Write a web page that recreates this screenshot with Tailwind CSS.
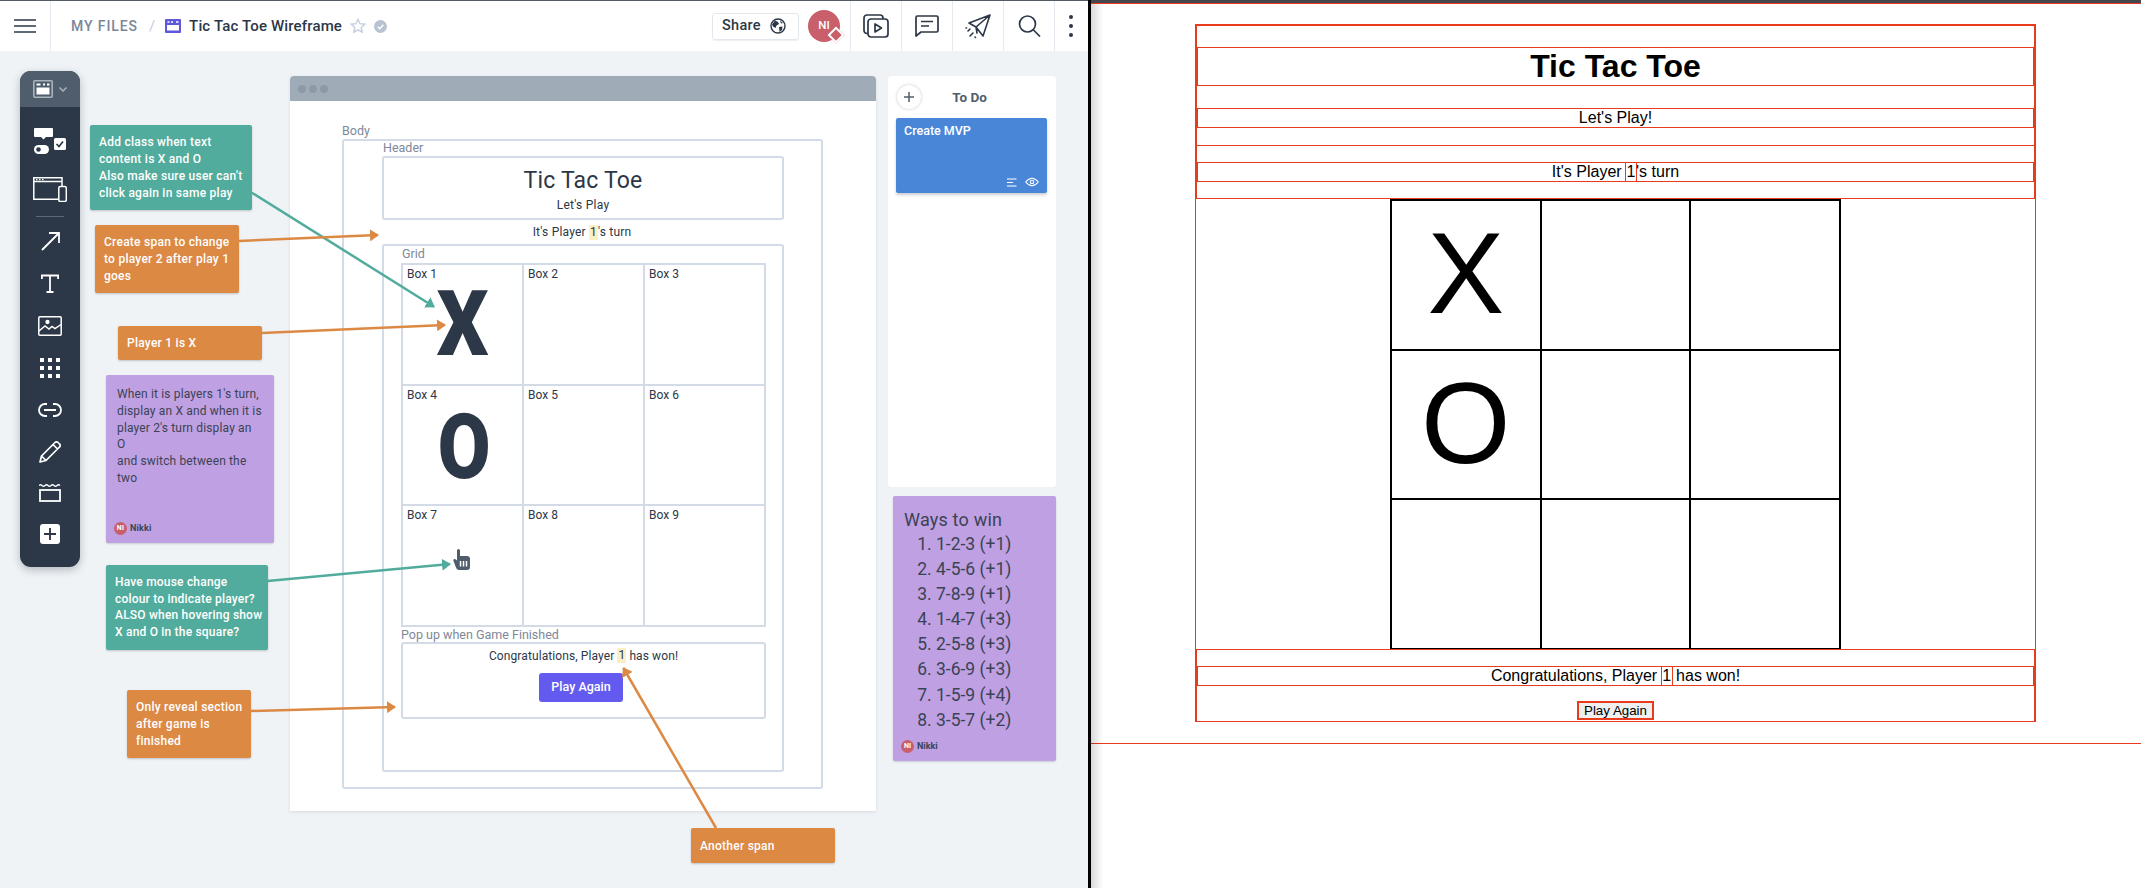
<!DOCTYPE html>
<html>
<head>
<meta charset="utf-8">
<script src="https://cdn.jsdelivr.net/npm/@tailwindcss/browser@4"></script>
</head>
<body class="m-0 bg-white overflow-hidden font-['Roboto',sans-serif]">
<div class="flex w-[2141px] h-[888px] overflow-hidden">

  <!-- LEFT: wireframe tool -->
  <div class="relative flex flex-col w-[1088px] h-full bg-[#eff3f6] text-[#2c3747]">
    <header class="flex items-stretch h-[51px] bg-white border-t border-[#555b63] shadow-[0_1px_2px_rgba(44,55,71,0.15)] shrink-0">
      <div class="flex items-center justify-center w-[51px] border-r border-[#e6eaf0]">
        <svg width="22" height="14" viewBox="0 0 22 14"><path d="M0 1h22M0 7h22M0 13h22" stroke="#2c3747" stroke-width="1.7"/></svg>
      </div>
      <div class="flex items-center ml-[20px] text-[15px]">
        <span class="font-medium tracking-[0.9px] text-[14px] text-[#7b8698]">MY FILES</span>
        <span class="ml-[11px] text-[#c4ccd8] text-[15px]">/</span>
        <svg class="ml-[10px]" width="16" height="14" viewBox="0 0 16 14"><rect width="16" height="14" rx="1" fill="#5d58dc"/><rect x="2" y="6" width="12" height="5.5" fill="#fff"/><path d="M2.5 3h2M6 3h2M11 3h2.5" stroke="#fff" stroke-width="1.6"/></svg>
        <span class="ml-[8px] font-medium text-[15px] tracking-[0.15px] text-[#2c3747]">Tic Tac Toe Wireframe</span>
        <svg class="ml-[8px]" width="16" height="16" viewBox="0 0 16 16"><path d="M8 1.2l2 4.5 4.8.5-3.6 3.2 1 4.8L8 11.8l-4.2 2.4 1-4.8L1.2 6.2 6 5.7z" fill="none" stroke="#c5cede" stroke-width="1.4"/></svg>
        <svg class="ml-[8px]" width="13" height="13" viewBox="0 0 13 13"><circle cx="6.5" cy="6.5" r="6.5" fill="#b8c3d1"/><path d="M3.8 6.8l2 2 3.6-4" fill="none" stroke="#fff" stroke-width="1.4"/></svg>
      </div>
      <div class="flex items-center ml-auto">
        <div class="flex items-center h-[27px] w-[87px] pl-[9px] border border-[#e3e7ee] rounded-[3px] shadow-[0_1px_1px_rgba(44,55,71,0.08)]">
          <span class="font-medium text-[14.5px] tracking-[0.3px]">Share</span>
          <svg class="ml-[9px]" width="16" height="16" viewBox="0 0 16 16"><circle cx="8" cy="8" r="7" fill="none" stroke="#2c3747" stroke-width="1.4"/><path d="M5 2.5l3 1.5 1 2-2.5 1.5-1 2.500-2.500-1.500-1-2zM9 9l3.500-.5-.5 3.500-2.500 2zM10 2.500l3 2.500-2 .5z" fill="#2c3747"/></svg>
        </div>
        <div class="relative flex items-center justify-center w-[32px] h-[32px] ml-[9px] mr-[10px] rounded-full bg-[#c85f6a] text-white text-[11.5px] font-medium">NI
          <div class="absolute right-[-2px] bottom-[1px] w-[8px] h-[8px] rotate-45 bg-[#c85f6a] border-2 border-white box-content"></div>
        </div>
        <div class="flex items-center justify-center w-[51px] h-full border-l border-[#e6eaf0]">
          <svg width="26" height="24" viewBox="0 0 26 24" fill="none" stroke="#2c3747" stroke-width="1.7" stroke-linejoin="round"><path d="M5 19.500H4a3 3 0 0 1-3-3V4a3 3 0 0 1 3-3h13a3 3 0 0 1 3 3v1"/><rect x="5" y="5" width="20" height="18" rx="3"/><path d="M12 10v8l6.500-4z"/></svg>
        </div>
        <div class="flex items-center justify-center w-[51px] h-full border-l border-[#e6eaf0]">
          <svg width="24" height="22" viewBox="0 0 24 22" fill="none" stroke="#2c3747" stroke-width="1.7" stroke-linejoin="round"><path d="M1 2.500A1.500 1.500 0 0 1 2.500 1h19A1.500 1.500 0 0 1 23 2.500v13a1.500 1.500 0 0 1-1.500 1.500H6l-5 4z"/><path d="M6 6.500h12M6 11h8"/></svg>
        </div>
        <div class="flex items-center justify-center w-[51px] h-full border-l border-[#e6eaf0]">
          <svg width="26" height="25" viewBox="0 0 26 25" fill="none" stroke="#2c3747" stroke-width="1.6" stroke-linejoin="round" stroke-linecap="round"><path d="M25 1L4 9l7 4zM25 1l-7 21-7-9zM25 1L11 13l1 6"/><path d="M5 15l-2 2M8 19l-3 3M1 14h.5M10 23l.5.5" /></svg>
        </div>
        <div class="flex items-center justify-center w-[51px] h-full border-l border-[#e6eaf0]">
          <svg width="23" height="22" viewBox="0 0 23 22" fill="none" stroke="#2c3747" stroke-width="1.7"><circle cx="9.500" cy="9" r="8"/><path d="M15.500 15l6.500 6.500"/></svg>
        </div>
        <div class="flex items-center justify-center w-[34px] h-full border-l border-[#e6eaf0]">
          <svg width="4" height="22" viewBox="0 0 4 22" class="mr-[1px]" fill="#2c3747"><circle cx="2" cy="2" r="2"/><circle cx="2" cy="11" r="2"/><circle cx="2" cy="20" r="2"/></svg>
        </div>
      </div>
    </header>

    <main class="flex-1 bg-[#eff3f6]"></main>

    <!-- toolbar -->
    <div class="absolute left-[20px] top-[71px] w-[60px] h-[496px] rounded-[11px] bg-[#2c3747] shadow-[0_3px_8px_rgba(44,55,71,0.3)] flex flex-col items-center overflow-hidden">
      <div class="flex items-center justify-center w-full h-[36px] bg-[#4f5d6c] shrink-0">
        <svg width="20" height="18" viewBox="0 0 20 18"><rect x=".8" y=".8" width="18.400" height="16.400" rx="1" fill="none" stroke="#aab4bf" stroke-width="1.600"/><rect x="3.500" y="7.500" width="13" height="7" fill="#fff"/><path d="M3.500 4.500h4M10 4.500h2M14 4.500h2.500" stroke="#fff" stroke-width="1.800"/></svg>
        <svg class="ml-[6px]" width="8" height="5" viewBox="0 0 8 5"><path d="M.5.500L4 4 7.500.500" fill="none" stroke="#aab4bf" stroke-width="1.500"/></svg>
      </div>
      <svg class="mt-[21px] shrink-0" width="32" height="26" viewBox="0 0 32 26"><path d="M1 0h17a1 1 0 0 1 1 1v7a1 1 0 0 1-1 1h-6l-2.500 2.500L7 9H1a1 1 0 0 1-1-1V1a1 1 0 0 1 1-1z" fill="#fff"/><rect x="20" y="10" width="12" height="12" rx="1.500" fill="#fff"/><path d="M22.500 16l2.500 2.500 4-5" fill="none" stroke="#2c3747" stroke-width="1.700"/><rect x="0" y="17" width="15" height="9" rx="4.500" fill="#fff"/><circle cx="4.500" cy="21.500" r="2.300" fill="#2c3747"/></svg>
      <svg class="mt-[23px] shrink-0" width="34" height="25" viewBox="0 0 34 25" fill="none" stroke="#fff" stroke-width="1.500"><path d="M.8 4.500h28M29 9V.8H.8v21.500H25"/><path d="M3 2.700h1.500M6 2.700h1.500M9 2.700h1.500" stroke-width="1.200"/><rect x="25.800" y="9.500" width="7.500" height="15" rx="1.500" fill="#2c3747"/></svg>
      <div class="w-[28px] h-px mt-[14px] bg-[#5c6876] shrink-0"></div>
      <svg class="mt-[15px] shrink-0" width="19" height="19" viewBox="0 0 19 19" fill="none" stroke="#fff" stroke-width="1.800"><path d="M1 18L18 1M8 1h10v10"/></svg>
      <svg class="mt-[23px] shrink-0" width="18" height="19" viewBox="0 0 18 19" fill="none" stroke="#fff" stroke-width="1.800"><path d="M.9 5V1.500h16.200V5M9 1.500V18M5.500 18h7"/></svg>
      <svg class="mt-[23px] shrink-0" width="24" height="20" viewBox="0 0 24 20" fill="none" stroke="#fff" stroke-width="1.500"><rect x=".8" y=".8" width="22.400" height="18.400" rx="1"/><path d="M1 15l6-5 4 3 3-2.500 3 2 6-4"/><circle cx="9.500" cy="6" r="1.400" fill="#fff"/></svg>
      <svg class="mt-[22px] shrink-0" width="20" height="20" viewBox="0 0 20 20" fill="#fff"><rect x="0" y="0" width="4" height="4"/><rect x="8" y="0" width="4" height="4"/><rect x="16" y="0" width="4" height="4"/><rect x="0" y="8" width="4" height="4"/><rect x="8" y="8" width="4" height="4"/><rect x="16" y="8" width="4" height="4"/><rect x="0" y="16" width="4" height="4"/><rect x="8" y="16" width="4" height="4"/><rect x="16" y="16" width="4" height="4"/></svg>
      <svg class="mt-[25px] shrink-0" width="24" height="14" viewBox="0 0 24 14" fill="none" stroke="#fff" stroke-width="1.800"><path d="M9 1H7a6 6 0 0 0 0 12h2M15 1h2a6 6 0 0 1 0 12h-2M6 7h12"/></svg>
      <svg class="mt-[24px] shrink-0" width="22" height="22" viewBox="0 0 22 22" fill="none" stroke="#fff" stroke-width="1.700" stroke-linejoin="round"><path d="M1 21l1.500-6L16 1.500a2 2 0 0 1 3 0l1.500 1.500a2 2 0 0 1 0 3L7 19.500zM2.500 15L7 19.500M14 3.500L18.500 8"/></svg>
      <svg class="mt-[20px] shrink-0" width="22" height="19" viewBox="0 0 22 19" fill="none" stroke="#fff"><rect x="1" y="7" width="20" height="11" stroke-width="1.800"/><path d="M0 2.500q1.500-1.500 3 0t3 0 3 0 3 0 3 0 3 0 3 0" stroke-width="1.300"/></svg>
      <svg class="mt-[22px] shrink-0" width="20" height="20" viewBox="0 0 20 20"><rect width="20" height="20" rx="3" fill="#fff"/><path d="M10 4v12M4 10h12" stroke="#2c3747" stroke-width="1.900"/></svg>
    </div>

    <!-- wireframe window -->
    <div class="absolute left-[290px] top-[76px] w-[586px] h-[735px] bg-white rounded-t-[4px] shadow-[0_1px_3px_rgba(44,55,71,0.12)] flex flex-col">
      <div class="flex items-center gap-[3px] h-[25px] pl-[8px] bg-[#a0abb8] rounded-t-[4px] shrink-0">
        <span class="w-[8px] h-[8px] rounded-full bg-[#8e99a8]"></span>
        <span class="w-[8px] h-[8px] rounded-full bg-[#8e99a8]"></span>
        <span class="w-[8px] h-[8px] rounded-full bg-[#8e99a8]"></span>
      </div>
      <div class="ml-[52px] mt-[22px] h-[16px] text-[12.500px] leading-[16px] text-[#7d8899]">Body</div>
      <div class="ml-[52px] w-[481px] h-[650px] border-2 border-[#d3dbe6] rounded-[3px] pl-[38px]">
        <div class="h-[15px] pl-[1px] text-[12.500px] leading-[14px] text-[#7d8899]">Header</div>
        <div class="flex flex-col items-center w-[402px] h-[64px] border-2 border-[#d3dbe6] rounded-[3px]">
          <div class="mt-[8px] text-[23px] leading-[30px] tracking-[0.2px]">Tic Tac Toe</div>
          <div class="text-[12px] leading-[18px] tracking-[0.25px]">Let's Play</div>
        </div>
        <div class="flex items-center justify-center w-[402px] h-[24px] pr-[2px] text-[12px] tracking-[0.2px]">
          <span>It's Player&nbsp;</span><span class="bg-[#fbefc6] leading-[15px] px-[1px]">1</span><span>'s turn</span>
        </div>
        <div class="w-[402px] h-[528px] border-2 border-[#d3dbe6] rounded-[3px]">
          <div class="h-[17px] pl-[18px] text-[12.500px] leading-[16px] text-[#7d8899]">Grid</div>
          <div class="grid grid-cols-3 grid-rows-3 ml-[17px] w-[365px] h-[364px] border-l-2 border-t-2 border-[#d3dbe6] text-[12px] leading-[16px]">
            <div class="border-r-2 border-b-2 border-[#d3dbe6] pl-[4px] pt-[1px] overflow-hidden">Box 1<div class="mt-[-5px] text-center pr-[4px] text-[90px] leading-[96px] font-black scale-x-[0.9]">X</div></div>
            <div class="border-r-2 border-b-2 border-[#d3dbe6] pl-[4px] pt-[1px]">Box 2</div>
            <div class="border-r-2 border-b-2 border-[#d3dbe6] pl-[4px] pt-[1px]">Box 3</div>
            <div class="border-r-2 border-b-2 border-[#d3dbe6] pl-[4px] pt-[1px] overflow-hidden">Box 4<div class="mt-[-3px] text-center pr-[1px] text-[90px] leading-[96px] font-black scale-x-[0.85]">O</div></div>
            <div class="border-r-2 border-b-2 border-[#d3dbe6] pl-[4px] pt-[1px]">Box 5</div>
            <div class="border-r-2 border-b-2 border-[#d3dbe6] pl-[4px] pt-[1px]">Box 6</div>
            <div class="border-r-2 border-b-2 border-[#d3dbe6] pl-[4px] pt-[1px]">Box 7
              <svg class="ml-[46px] mt-[26px]" width="18" height="21" viewBox="0 0 18 21"><path d="M4 1.500a1.500 1.500 0 0 1 3 0V7h7a3 3 0 0 1 3 3v8a3 3 0 0 1-3 3H6a3 3 0 0 1-3-2.500L.5 12C0 11 .8 9.500 2 10l2 1.500z" fill="#4f5d6c"/><path d="M7.500 12v5.500M10.500 12v5.500M13.500 12v5.500" stroke="#fff" stroke-width="1.500"/></svg>
            </div>
            <div class="border-r-2 border-b-2 border-[#d3dbe6] pl-[4px] pt-[1px]">Box 8</div>
            <div class="border-r-2 border-b-2 border-[#d3dbe6] pl-[4px] pt-[1px]">Box 9</div>
          </div>
          <div class="h-[15px] pl-[17px] text-[12.500px] leading-[15px] text-[#7d8899]">Pop up when Game Finished</div>
          <div class="flex flex-col items-center ml-[17px] w-[365px] h-[77px] border-2 border-[#d3dbe6] rounded-[3px] text-[12px]">
            <div class="flex items-center h-[15px] mt-[4px] tracking-[0.1px]"><span>Congratulations, Player&nbsp;</span><span class="bg-[#fbefc6] px-[1px] leading-[15px]">1</span><span>&nbsp;has won!</span></div>
            <button class="mt-[10px] mr-[5px] w-[84px] h-[29px] rounded-[3px] bg-[#635bf0] text-white text-[12.500px] font-medium">Play Again</button>
          </div>
        </div>
      </div>
    </div>

    <!-- To Do column -->
    <div class="absolute left-[888px] top-[76px] w-[168px] h-[411px] bg-white rounded-[4px] px-[8px]">
      <div class="relative flex items-center justify-center h-[42px]">
        <div class="absolute left-[1px] top-[9px] flex items-center justify-center w-[24px] h-[24px] rounded-full bg-white shadow-[0_0_3px_rgba(44,55,71,0.3)]">
          <svg width="10" height="10" viewBox="0 0 10 10"><path d="M5 0v10M0 5h10" stroke="#4f5d6c" stroke-width="1.500"/></svg>
        </div>
        <span class="mr-[5px] mt-[1px] font-bold text-[13.500px] text-[#4f5d6c]">To Do</span>
      </div>
      <div class="flex flex-col w-[151px] h-[75px] bg-[#4a86d8] rounded-[2px] shadow-[0_2px_3px_rgba(44,55,71,0.25)] px-[8px] pt-[5px] pb-[6px] text-white">
        <div class="text-[12.500px] leading-[16px] font-medium">Create MVP</div>
        <div class="flex items-center justify-end gap-[8px] mt-auto">
          <svg width="10" height="9" viewBox="0 0 10 9"><path d="M0 1h9.500M0 4.500h6M0 8h9.500" stroke="#fff" stroke-width="1.100"/></svg>
          <svg width="14" height="10" viewBox="0 0 14 10" fill="none" stroke="#fff" stroke-width="1.100"><path d="M.7 5Q7-2.500 13.300 5 7 12.500.7 5z"/><circle cx="7" cy="5" r="1.700"/></svg>
        </div>
      </div>
    </div>

    <!-- Sticky notes -->
    <div class="absolute left-[90px] top-[125px] w-[162px] h-[85px] pl-[9px] pt-[9px] bg-[#52ac9d] rounded-[2px] shadow-[0_1px_2px_rgba(44,55,71,0.25)] text-white text-[12px] leading-[17px] font-medium tracking-[0.25px]">Add class when text<br>content is X and O<br>Also make sure user can't<br>click again in same play</div>
    <div class="absolute left-[95px] top-[225px] w-[144px] h-[68px] pl-[9px] pt-[9px] bg-[#dc8944] rounded-[2px] shadow-[0_1px_2px_rgba(44,55,71,0.25)] text-white text-[12px] leading-[17px] font-medium tracking-[0.25px]">Create span to change<br>to player 2 after play 1<br>goes</div>
    <div class="absolute left-[118px] top-[326px] w-[144px] h-[34px] pl-[9px] pt-[9px] bg-[#dc8944] rounded-[2px] shadow-[0_1px_2px_rgba(44,55,71,0.25)] text-white text-[12px] leading-[17px] font-medium tracking-[0.25px]">Player 1 is X</div>
    <div class="absolute left-[106px] top-[375px] w-[168px] h-[168px] pl-[11px] pt-[11px] bg-[#bfa0e2] rounded-[2px] shadow-[0_1px_2px_rgba(44,55,71,0.2)] text-[#3a4354] text-[12px] leading-[16.800px] tracking-[0.15px]">
      When it is players 1's turn,<br>display an X and when it is<br>player 2's turn display an<br>O<br>and switch between the<br>two
      <div class="absolute left-[8px] bottom-[8px] flex items-center">
        <span class="flex items-center justify-center w-[13px] h-[13px] rounded-full bg-[#c85f6a] text-white text-[7px] font-bold leading-none">NI</span>
        <span class="ml-[3px] text-[9px] leading-none font-bold text-[#3a4354]">Nikki</span>
      </div>
    </div>
    <div class="absolute left-[106px] top-[565px] w-[162px] h-[85px] pl-[9px] pt-[9px] bg-[#52ac9d] rounded-[2px] shadow-[0_1px_2px_rgba(44,55,71,0.25)] text-white text-[12px] leading-[16.500px] font-medium tracking-[0.2px]">Have mouse change<br>colour to indicate player?<br>ALSO when hovering show<br>X and O in the square?</div>
    <div class="absolute left-[127px] top-[690px] w-[124px] h-[68px] pl-[9px] pt-[9px] bg-[#dc8944] rounded-[2px] shadow-[0_1px_2px_rgba(44,55,71,0.25)] text-white text-[12px] leading-[17px] font-medium tracking-[0.25px]">Only reveal section<br>after game is<br>finished</div>
    <div class="absolute left-[691px] top-[828px] w-[144px] h-[35px] pl-[9px] pt-[10px] bg-[#dc8944] rounded-[2px] shadow-[0_1px_2px_rgba(44,55,71,0.25)] text-white text-[12px] leading-[17px] font-medium tracking-[0.25px]">Another span</div>
    <div class="absolute left-[893px] top-[496px] w-[163px] h-[265px] pl-[11px] pt-[12px] bg-[#bfa0e2] rounded-[2px] shadow-[0_1px_2px_rgba(44,55,71,0.2)] text-[#3a4354]">
      <div class="text-[18px] leading-[24px] tracking-[0.2px]">Ways to win</div>
      <ol class="list-decimal pl-[32px] text-[17.500px] leading-[25.100px]">
        <li>1-2-3 (+1)</li><li>4-5-6 (+1)</li><li>7-8-9 (+1)</li><li>1-4-7 (+3)</li><li>2-5-8 (+3)</li><li>3-6-9 (+3)</li><li>1-5-9 (+4)</li><li>3-5-7 (+2)</li>
      </ol>
      <div class="absolute left-[8px] bottom-[8px] flex items-center">
        <span class="flex items-center justify-center w-[13px] h-[13px] rounded-full bg-[#c85f6a] text-white text-[7px] font-bold leading-none">NI</span>
        <span class="ml-[3px] text-[9px] leading-none font-bold text-[#3a4354]">Nikki</span>
      </div>
    </div>

    <!-- connectors -->
    <svg class="absolute left-0 top-0 pointer-events-none" width="1088" height="888" viewBox="0 0 1088 888" fill="none" stroke-width="2.500">
      <defs>
        <marker id="t" markerUnits="userSpaceOnUse" markerWidth="10" markerHeight="12" refX="8" refY="6" orient="auto"><path d="M0 0L9 6 0 12z" fill="#52ac9d"/></marker>
        <marker id="o" markerUnits="userSpaceOnUse" markerWidth="10" markerHeight="12" refX="8" refY="6" orient="auto"><path d="M0 0L9 6 0 12z" fill="#dc8944"/></marker>
      </defs>
      <path d="M251.800 192.700L434 306.700" stroke="#52ac9d" marker-end="url(#t)"/>
      <path d="M239 241L378 235" stroke="#dc8944" marker-end="url(#o)"/>
      <path d="M262 333L445 325" stroke="#dc8944" marker-end="url(#o)"/>
      <path d="M267.500 581L450 564" stroke="#52ac9d" marker-end="url(#t)"/>
      <path d="M251 711L395 707" stroke="#dc8944" marker-end="url(#o)"/>
      <path d="M716 828L623.400 668" stroke="#dc8944" marker-end="url(#o)"/>
    </svg>
  </div>

  <!-- divider -->
  <div class="w-[3px] h-full bg-black shrink-0"></div>

  <!-- RIGHT: rendered page -->
  <div class="relative w-[1050px] h-full overflow-hidden bg-white text-black font-['Liberation_Sans',Arial,sans-serif]">
    <div class="h-[3px] bg-[#45474c]"></div>
    <div class="h-px bg-[#ea3a1d]"></div>
    <div class="h-[739px] overflow-hidden">
      <div class="flex flex-col ml-[105px] mt-[21px] w-[839px] h-[696px] outline outline-1 outline-[#ea3a1d]">
        <section class="flex flex-col mx-px mt-px h-[119px] outline outline-1 outline-[#ea3a1d] text-center shrink-0">
          <h1 class="mx-px mt-[22px] h-[37px] text-[32px] leading-[37px] font-bold outline outline-1 outline-[#ea3a1d]">Tic Tac Toe</h1>
          <p class="mx-px mt-[24px] h-[18px] text-[16px] leading-[18px] outline outline-1 outline-[#ea3a1d]">Let's Play!</p>
        </section>
        <section class="flex flex-col mx-px mt-px h-[52px] outline outline-1 outline-[#ea3a1d] text-center shrink-0">
          <p class="mx-px mt-[17px] h-[18px] text-[16px] leading-[18px] outline outline-1 outline-[#ea3a1d]">It's Player <span class="inline-block w-[10px] outline outline-1 outline-[#ea3a1d]">1</span>'s turn</p>
        </section>
        <div class="grid grid-cols-3 grid-rows-3 w-[451px] h-[451px] mx-auto mt-px box-border border-l-2 border-t-2 border-black text-center text-[115px] leading-[145px] shrink-0">
          <div class="border-r-2 border-b-2 border-black">X</div>
          <div class="border-r-2 border-b-2 border-black"></div>
          <div class="border-r-2 border-b-2 border-black"></div>
          <div class="border-r-2 border-b-2 border-black">O</div>
          <div class="border-r-2 border-b-2 border-black"></div>
          <div class="border-r-2 border-b-2 border-black"></div>
          <div class="border-r-2 border-b-2 border-black"></div>
          <div class="border-r-2 border-b-2 border-black"></div>
          <div class="border-r-2 border-b-2 border-black"></div>
        </div>
        <section class="flex flex-col flex-1 items-center mx-px outline outline-1 outline-[#ea3a1d] text-center">
          <p class="self-stretch mx-px mt-[17px] h-[18px] text-[16px] leading-[18px] outline outline-1 outline-[#ea3a1d]">Congratulations, Player <span class="inline-block w-[10px] outline outline-1 outline-[#ea3a1d]">1</span> has won!</p>
          <button class="mt-[16px] w-[77px] h-[19px] bg-[#efefef] border-2 border-[#ea3a1d] text-[13.333px] leading-[13px]">Play Again</button>
        </section>
      </div>
    </div>
    <div class="h-px bg-[#ea3a1d]"></div>
    <div class="absolute left-0 top-[4px] bottom-0 w-[12px] bg-linear-to-r from-black/15 to-transparent pointer-events-none"></div>
  </div>
</div>
</body>
</html>
